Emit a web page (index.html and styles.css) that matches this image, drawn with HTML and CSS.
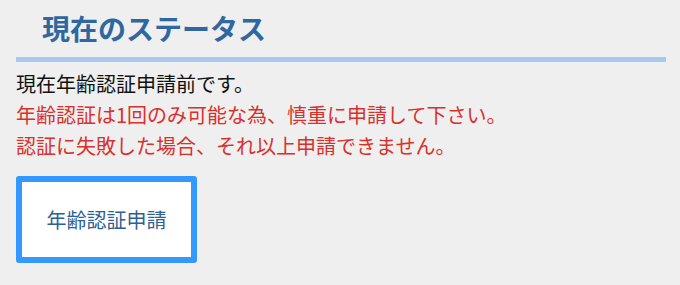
FILE: index.html
```html
<!DOCTYPE html>
<html lang="ja">
<head>
    <meta charset="UTF-8">
    <meta name="viewport" content="width=device-width, initial-scale=1.0">
    <title>現在のステータス</title>
    <link rel="stylesheet" href="styles.css">
</head>
<body>
    <div class="container">
        <!-- ステータス見出し -->
        <h2 class="titulo">現在のステータス</h2>

        <div class="mensagens">
            <p class="texto">現在年齢認証申請前です。</p>
            <p class="aviso">年齢認証は1回のみ可能な為、慎重に申請して下さい。</p>
            <p class="aviso">認証に失敗した場合、それ以上申請できません。</p>
        </div>

        <button class="botao-solicitar">年齢認証申請</button>
    </div>
</body>
</html>
```

FILE: styles.css
```css
body {
    font-family: "Noto Sans CJK JP", "Noto Sans", sans-serif;
    margin: 0;
    padding: 0;
    background-color: #efefef; /* cinza claro */
    color: #111;
}
.container {
    padding: 0 14px 0 16px;
}
.titulo {
    margin: 0;
    padding: 10px 0 11px 26px;
    font-size: 28px;
    line-height: 36px;
    font-weight: bold;
    color: #2f67a1;
    border-bottom: 5px solid #a6c9f1;
}
.mensagens {
    padding-top: 6px;
}
.texto, .aviso {
    margin: 0;
    font-size: 20px;
    line-height: 31px;
}
.aviso {
    color: #d9302c;
}
.botao-solicitar {
    margin-top: 15px;
    width: 181px;
    height: 87px;
    background-color: #fff;
    border: 6px solid #3399ff;
    border-radius: 3px;
    font-family: "Noto Sans CJK JP", "Noto Sans", sans-serif;
    font-size: 20px;
    color: #2f5f94;
    cursor: pointer;
}
```
